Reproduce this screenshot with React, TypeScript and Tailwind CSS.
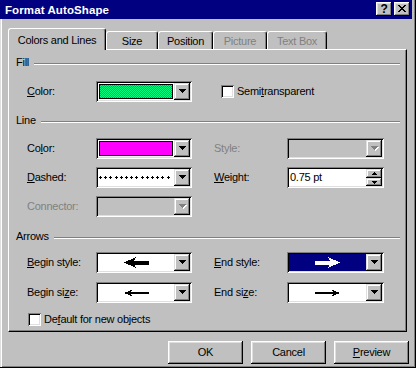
import React from "react";

const sunken =
  "shadow-[inset_1px_1px_0_#808080,inset_-1px_-1px_0_#ffffff,inset_2px_2px_0_#000000,inset_-2px_-2px_0_#dfdfdf]";
const raised =
  "shadow-[inset_-1px_-1px_0_#000000,inset_1px_1px_0_#ffffff,inset_-2px_-2px_0_#808080,inset_2px_2px_0_#dfdfdf]";
const raisedSmall =
  "shadow-[inset_-1px_-1px_0_#000000,inset_1px_1px_0_#dfdfdf,inset_-2px_-2px_0_#808080,inset_2px_2px_0_#ffffff]";

function U({ children }: { children: React.ReactNode }) {
  return <span className="underline decoration-1 underline-offset-1">{children}</span>;
}

function DownTri({ disabled }: { disabled?: boolean }) {
  return (
    <svg width="8" height="5" shapeRendering="crispEdges">
      {disabled && (
        <g fill="#ffffff">
          <rect x="1" y="1" width="7" height="1" />
          <rect x="2" y="2" width="5" height="1" />
          <rect x="3" y="3" width="3" height="1" />
          <rect x="4" y="4" width="1" height="1" />
        </g>
      )}
      <g fill={disabled ? "#808080" : "#000000"}>
        <rect x="0" y="0" width="7" height="1" />
        <rect x="1" y="1" width="5" height="1" />
        <rect x="2" y="2" width="3" height="1" />
        <rect x="3" y="3" width="1" height="1" />
      </g>
    </svg>
  );
}

function DropBtn({ disabled }: { disabled?: boolean }) {
  return (
    <div
      className={`flex h-full w-[16px] shrink-0 items-center justify-center bg-[#c0c0c0] pl-px ${raisedSmall}`}
    >
      <DownTri disabled={disabled} />
    </div>
  );
}

function Combo({
  w,
  disabled,
  children,
}: {
  w: string;
  disabled?: boolean;
  children?: React.ReactNode;
}) {
  return (
    <div
      className={`flex h-[21px] shrink-0 p-[2px] ${w} ${sunken} ${
        disabled ? "bg-[#c0c0c0]" : "bg-white"
      }`}
    >
      <div className="flex min-w-0 flex-1">{children}</div>
      <DropBtn disabled={disabled} />
    </div>
  );
}

function CheckBox() {
  return <div className={`h-[13px] w-[13px] shrink-0 bg-white ${sunken}`} />;
}

function Heading({ children }: { children: React.ReactNode }) {
  return (
    <div className="flex h-[13px] items-center">
      <span className="shrink-0">{children}</span>
      <div className="ml-[5px] mt-[3px] h-[2px] flex-1 border-t border-b border-t-[#808080] border-b-white" />
    </div>
  );
}

function Tab({
  active,
  disabled,
  w,
  children,
}: {
  active?: boolean;
  disabled?: boolean;
  w: string;
  children: React.ReactNode;
}) {
  return (
    <div
      className={`${w} flex shrink-0 justify-center rounded-t-[3px] border-t border-l border-r border-white border-r-black bg-[#c0c0c0] shadow-[inset_-1px_0_0_#808080] ${
        active ? "-mb-px h-[22px] pt-[5px]" : "h-[18px] pt-[3px]"
      } ${disabled ? "text-[#808080]" : "text-black"}`}
    >
      {children}
    </div>
  );
}

function DottedLine() {
  const xs = Array.from({ length: 14 }, (_, i) => 1 + i * 5.2);
  return (
    <svg width="74" height="3" shapeRendering="crispEdges">
      {xs.map((x, i) => (
        <g key={i} fill="#000000">
          <rect x={Math.round(x)} y="1" width="3" height="1" />
          <rect x={Math.round(x) + 1} y="0" width="1" height="3" />
        </g>
      ))}
    </svg>
  );
}

function Button({ children }: { children: React.ReactNode }) {
  return (
    <div
      className={`flex h-[23px] w-[75px] items-center justify-center bg-[#c0c0c0] ${raised}`}
    >
      {children}
    </div>
  );
}

export default function App() {
  return (
    <div className="flex h-[368px] w-[416px] flex-col overflow-hidden border-r border-b border-black bg-[#c0c0c0] font-['Liberation_Sans',Arial,sans-serif] text-[11px] leading-[13px] tracking-[-0.25px] text-black shadow-[inset_-1px_-1px_0_#808080]">
      {/* Title bar */}
      <div className="mr-[3px] flex h-[19px] shrink-0 items-start justify-between bg-[#000080] pl-[5px] pr-[2px]">
        <span className="pt-[4px] text-[11.5px] font-bold tracking-[0.1px] text-white">
          Format AutoShape
        </span>
        <div className="flex gap-[2px] pt-[2px]">
          <div
            className={`flex h-[14px] w-[16px] items-start justify-center bg-[#c0c0c0] pt-[1px] text-[12px] font-bold leading-[12px] ${raised}`}
          >
            ?
          </div>
          <div
            className={`flex h-[14px] w-[16px] items-center justify-center bg-[#c0c0c0] pb-px ${raised}`}
          >
            <svg width="8" height="7" shapeRendering="crispEdges" fill="#000000">
              <rect x="0" y="0" width="2" height="1" />
              <rect x="6" y="0" width="2" height="1" />
              <rect x="1" y="1" width="2" height="1" />
              <rect x="5" y="1" width="2" height="1" />
              <rect x="2" y="2" width="4" height="1" />
              <rect x="3" y="3" width="2" height="1" />
              <rect x="2" y="4" width="4" height="1" />
              <rect x="1" y="5" width="2" height="1" />
              <rect x="5" y="5" width="2" height="1" />
              <rect x="0" y="6" width="2" height="1" />
              <rect x="6" y="6" width="2" height="1" />
            </svg>
          </div>
        </div>
      </div>

      {/* Body */}
      <div className="flex flex-1 flex-col pl-[8px] pt-[9px] shadow-[inset_1px_0_0_#dfdfdf,inset_2px_0_0_#ffffff]">
        {/* Tabs */}
        <div className="relative z-10 flex h-[21px] items-end">
          <Tab active w="w-[98px]">
            Colors and Lines
          </Tab>
          <Tab w="w-[52px]">Size</Tab>
          <Tab w="w-[55px]">Position</Tab>
          <Tab disabled w="w-[54px]">
            Picture
          </Tab>
          <Tab disabled w="w-[60px]">
            Text Box
          </Tab>
        </div>

        {/* Panel */}
        <div className="flex h-[283px] w-[399px] flex-col border border-white border-r-black border-b-black pl-[7px] pr-[6px] pt-[6px] shadow-[inset_-1px_-1px_0_#808080]">
          <Heading>Fill</Heading>
          <div className="mt-[12px] flex h-[21px] items-center pl-[11px]">
            <span className="w-[69px] shrink-0">
              <U>C</U>olor:
            </span>
            <Combo w="w-[96px]">
              <div className="m-px flex-1 border border-black bg-[image:repeating-conic-gradient(#00ff80_0_25%,#00a0a0_0_50%)] bg-[length:2px_2px]" />
            </Combo>
            <div className="ml-[29px]">
              <CheckBox />
            </div>
            <span className="ml-[3px]">
              Semi<U>t</U>ransparent
            </span>
          </div>

          <div className="mt-[12px]">
            <Heading>Line</Heading>
          </div>
          <div className="mt-[11px] flex h-[21px] items-center pl-[11px]">
            <span className="w-[69px] shrink-0">
              Co<U>l</U>or:
            </span>
            <Combo w="w-[96px]">
              <div className="m-px flex-1 border border-black bg-[#ff00ff]" />
            </Combo>
            <span className="ml-[22px] w-[73px] shrink-0 text-[#808080]">Style:</span>
            <Combo w="w-[97px]" disabled />
          </div>
          <div className="mt-[8px] flex h-[21px] items-center pl-[11px]">
            <span className="w-[69px] shrink-0">
              <U>D</U>ashed:
            </span>
            <Combo w="w-[96px]">
              <div className="flex flex-1 items-center">
                <DottedLine />
              </div>
            </Combo>
            <span className="ml-[22px] w-[73px] shrink-0">
              <U>W</U>eight:
            </span>
            <div className={`flex h-[21px] w-[97px] shrink-0 bg-white p-[2px] ${sunken}`}>
              <div className="flex flex-1 items-center pl-[1px]">0.75 pt</div>
              <div className="flex w-[16px] flex-col">
                <div
                  className={`flex h-[9px] items-center justify-center bg-[#c0c0c0] pl-px ${raisedSmall}`}
                >
                  <svg width="5" height="3" shapeRendering="crispEdges" fill="#000000">
                    <rect x="2" y="0" width="1" height="1" />
                    <rect x="1" y="1" width="3" height="1" />
                    <rect x="0" y="2" width="5" height="1" />
                  </svg>
                </div>
                <div
                  className={`flex h-[8px] items-center justify-center bg-[#c0c0c0] pl-px ${raisedSmall}`}
                >
                  <svg width="5" height="3" shapeRendering="crispEdges" fill="#000000">
                    <rect x="0" y="0" width="5" height="1" />
                    <rect x="1" y="1" width="3" height="1" />
                    <rect x="2" y="2" width="1" height="1" />
                  </svg>
                </div>
              </div>
            </div>
          </div>
          <div className="mt-[8px] flex h-[21px] items-center pl-[11px]">
            <span className="w-[69px] shrink-0 text-[#808080]">Connector:</span>
            <Combo w="w-[96px]" disabled />
          </div>

          <div className="mt-[13px]">
            <Heading>Arrows</Heading>
          </div>
          <div className="mt-[9px] flex h-[21px] items-center pl-[11px]">
            <span className="w-[69px] shrink-0">
              <U>B</U>egin style:
            </span>
            <Combo w="w-[96px]">
              <div className="flex flex-1 items-center justify-center">
                <svg width="25" height="11" shapeRendering="crispEdges">
                  <polygon points="0,5.5 12,0 9,5.5 12,11" fill="#000000" />
                  <rect x="7" y="4" width="18" height="4" fill="#000000" />
                </svg>
              </div>
            </Combo>
            <span className="ml-[22px] w-[73px] shrink-0">
              <U>E</U>nd style:
            </span>
            <Combo w="w-[97px]">
              <div className="flex flex-1 items-center justify-center bg-[#000080]">
                <svg width="25" height="11" shapeRendering="crispEdges">
                  <polygon points="25,5.5 13,0 16,5.5 13,11" fill="#ffffff" />
                  <rect x="0" y="4" width="18" height="4" fill="#ffffff" />
                </svg>
              </div>
            </Combo>
          </div>
          <div className="mt-[9px] flex h-[21px] items-center pl-[11px]">
            <span className="w-[69px] shrink-0">
              Begin si<U>z</U>e:
            </span>
            <Combo w="w-[96px]">
              <div className="flex flex-1 items-center justify-center">
                <svg width="25" height="8" shapeRendering="crispEdges">
                  <polygon points="0,4 9,0.5 6,4 9,7.5" fill="#000000" />
                  <rect x="5" y="3" width="20" height="2" fill="#000000" />
                </svg>
              </div>
            </Combo>
            <span className="ml-[22px] w-[73px] shrink-0">
              End si<U>z</U>e:
            </span>
            <Combo w="w-[97px]">
              <div className="flex flex-1 items-center justify-center">
                <svg width="25" height="8" shapeRendering="crispEdges">
                  <polygon points="25,4 16,0.5 19,4 16,7.5" fill="#000000" />
                  <rect x="0" y="3" width="20" height="2" fill="#000000" />
                </svg>
              </div>
            </Combo>
          </div>
          <div className="mt-[10px] flex h-[13px] items-center pl-[12px]">
            <CheckBox />
            <span className="ml-[3px]">
              De<U>f</U>ault for new objects
            </span>
          </div>
        </div>

        {/* Buttons */}
        <div className="mt-[9px] flex justify-end gap-[8px] pr-[6px]">
          <Button>OK</Button>
          <Button>Cancel</Button>
          <Button>
            <span>
              <U>P</U>review
            </span>
          </Button>
        </div>
      </div>
    </div>
  );
}
